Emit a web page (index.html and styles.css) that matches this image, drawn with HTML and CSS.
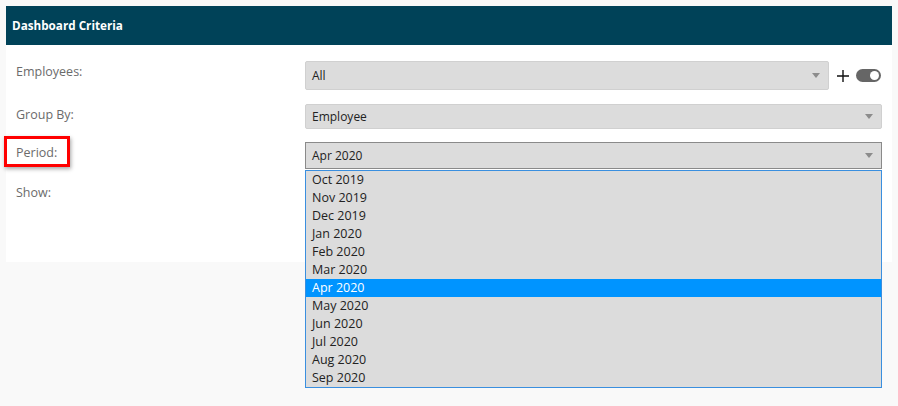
FILE: index.html
```html
<!DOCTYPE html>
<html lang="en">
<head>
    <meta charset="UTF-8">
    <title>Dashboard Criteria</title>
    <link rel="stylesheet" href="styles.css">
</head>
<body>
    <div class="panel">
        <div class="panel-header">Dashboard Criteria</div>
        <div class="panel-body">
            <div class="form-row first">
                <div class="form-label">Employees:</div>
                <div class="form-control with-extras">
                    <div class="select tall">
                        <span>All</span>
                        <span class="arrow"></span>
                    </div>
                    <span class="plus">
                        <svg width="12" height="12" viewBox="0 0 12 12"><path d="M6 0v12M0 6h12" stroke="#111" stroke-width="1.4"/></svg>
                    </span>
                    <span class="toggle"><span class="knob"></span></span>
                </div>
            </div>
            <div class="form-row">
                <div class="form-label">Group By:</div>
                <div class="form-control">
                    <div class="select">
                        <span>Employee</span>
                        <span class="arrow"></span>
                    </div>
                </div>
            </div>
            <div class="form-row">
                <div class="form-label"><span class="highlight">Period:</span></div>
                <div class="form-control">
                    <div class="dropdown">
                        <div class="select open">
                            <span>Apr 2020</span>
                            <span class="arrow"></span>
                        </div>
                        <ul class="options">
                            <li>Oct 2019</li>
                            <li>Nov 2019</li>
                            <li>Dec 2019</li>
                            <li>Jan 2020</li>
                            <li>Feb 2020</li>
                            <li>Mar 2020</li>
                            <li class="selected">Apr 2020</li>
                            <li>May 2020</li>
                            <li>Jun 2020</li>
                            <li>Jul 2020</li>
                            <li>Aug 2020</li>
                            <li>Sep 2020</li>
                        </ul>
                    </div>
                </div>
            </div>
            <div class="form-row">
                <div class="form-label">Show:</div>
                <div class="form-control"></div>
            </div>
        </div>
    </div>
</body>
</html>
```

FILE: styles.css
```css
* {
    box-sizing: border-box;
    margin: 0;
    padding: 0;
}

html, body {
    min-height: 100%;
}

body {
    background-color: #f9f9f9;
    font-family: 'Open Sans', sans-serif;
    font-size: 12px;
    padding: 6px;
    min-height: 100vh;
}

.panel {
    width: 886px;
    background-color: #ffffff;
}

.panel-header {
    background-color: #004258;
    color: #ffffff;
    font-weight: bold;
    font-size: 11.7px;
    height: 39px;
    line-height: 39px;
    padding-left: 6px;
}

.panel-body {
    padding: 16px 10px 0 10px;
    height: 217px;
}

.form-row {
    display: flex;
    margin-bottom: 13px;
}

.form-row.first {
    margin-bottom: 14px;
}

.form-label {
    width: 289px;
    color: #6b6b6b;
    padding-top: 2px;
    font-size: 12.5px;
}

.highlight {
    position: relative;
}

.highlight::before {
    content: '';
    position: absolute;
    box-sizing: border-box;
    left: -12px;
    top: -8px;
    width: 66px;
    height: 31px;
    border: 3px solid #ff0000;
    box-shadow: 1px 2px 4px rgba(0, 0, 0, 0.35);
}

.form-control {
    flex: 1;
}

.with-extras {
    display: flex;
    align-items: center;
}

.with-extras .select {
    width: 524px;
}

.select {
    display: flex;
    align-items: center;
    justify-content: space-between;
    height: 25px;
    padding: 0 8px 0 6px;
    background-color: #dcdcdc;
    border: 1px solid #d0d0d0;
    border-radius: 2px;
    color: #222;
}

.select.tall {
    height: 29px;
}

.select.open {
    height: 27px;
    border-color: #8a8a8a;
    border-radius: 0;
}

.arrow {
    width: 0;
    height: 0;
    border-left: 4px solid transparent;
    border-right: 4px solid transparent;
    border-top: 5px solid #8c8c8c;
}

.plus {
    display: flex;
    margin-left: 8px;
}

.toggle {
    display: flex;
    align-items: center;
    justify-content: flex-end;
    width: 25px;
    height: 13px;
    margin-left: 7px;
    padding-right: 2px;
    border-radius: 7px;
    background-color: #666;
}

.knob {
    width: 9px;
    height: 9px;
    border-radius: 50%;
    background-color: #fff;
}

.dropdown {
    position: relative;
}

.options {
    position: absolute;
    top: 28px;
    left: 0;
    right: 0;
    list-style: none;
    background-color: #dcdcdc;
    border: 1px solid #3a8fdf;
    z-index: 2;
}

.options li {
    height: 18px;
    line-height: 18px;
    padding-left: 6px;
    color: #222;
    font-size: 12.5px;
}

.options li.selected {
    background-color: #0094ff;
    color: #ffffff;
}
```
